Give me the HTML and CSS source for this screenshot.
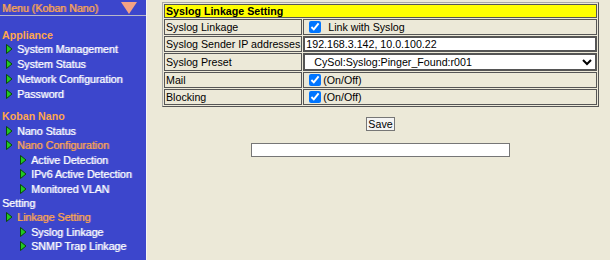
FILE: index.html
```html
<!DOCTYPE html>
<html lang="en">
<head>
    <meta charset="UTF-8">
    <title>Syslog Linkage Setting</title>
    <link rel="stylesheet" href="styles.css">
</head>
<body>
    <div class="frames">
        <nav class="menu">
            <div class="menu-head">
                <span class="menu-title">Menu (Koban Nano)</span>
                <svg class="menu-toggle" width="16" height="12" viewBox="0 0 16 12"><polygon points="0,0 16,0 8,12" fill="#f4a284"/></svg>
            </div>

            <div class="group appliance">
                <div class="group-title">Appliance</div>
                <div class="item lv1"><svg class="arrow" width="7" height="10" viewBox="0 0 7 10"><polygon points="0.5,0.5 6,5 0.5,9.5" fill="#22c822" stroke="#0a4a0a" stroke-width="1"/></svg>System Management</div>
                <div class="item lv1"><svg class="arrow" width="7" height="10" viewBox="0 0 7 10"><polygon points="0.5,0.5 6,5 0.5,9.5" fill="#22c822" stroke="#0a4a0a" stroke-width="1"/></svg>System Status</div>
                <div class="item lv1"><svg class="arrow" width="7" height="10" viewBox="0 0 7 10"><polygon points="0.5,0.5 6,5 0.5,9.5" fill="#22c822" stroke="#0a4a0a" stroke-width="1"/></svg>Network Configuration</div>
                <div class="item lv1"><svg class="arrow" width="7" height="10" viewBox="0 0 7 10"><polygon points="0.5,0.5 6,5 0.5,9.5" fill="#22c822" stroke="#0a4a0a" stroke-width="1"/></svg>Password</div>
            </div>

            <div class="group nano">
                <div class="group-title">Koban Nano</div>
                <div class="item lv1"><svg class="arrow" width="7" height="10" viewBox="0 0 7 10"><polygon points="0.5,0.5 6,5 0.5,9.5" fill="#22c822" stroke="#0a4a0a" stroke-width="1"/></svg>Nano Status</div>
                <div class="item lv1 open"><svg class="arrow" width="7" height="10" viewBox="0 0 7 10"><polygon points="0.5,0.5 6,5 0.5,9.5" fill="#22c822" stroke="#0a4a0a" stroke-width="1"/></svg>Nano Configuration</div>
                <div class="item lv2"><svg class="arrow" width="7" height="10" viewBox="0 0 7 10"><polygon points="0.5,0.5 6,5 0.5,9.5" fill="#22c822" stroke="#0a4a0a" stroke-width="1"/></svg>Active Detection</div>
                <div class="item lv2"><svg class="arrow" width="7" height="10" viewBox="0 0 7 10"><polygon points="0.5,0.5 6,5 0.5,9.5" fill="#22c822" stroke="#0a4a0a" stroke-width="1"/></svg>IPv6 Active Detection</div>
                <div class="item lv2"><svg class="arrow" width="7" height="10" viewBox="0 0 7 10"><polygon points="0.5,0.5 6,5 0.5,9.5" fill="#22c822" stroke="#0a4a0a" stroke-width="1"/></svg>Monitored VLAN Setting</div>
                <div class="item lv1 open"><svg class="arrow" width="7" height="10" viewBox="0 0 7 10"><polygon points="0.5,0.5 6,5 0.5,9.5" fill="#22c822" stroke="#0a4a0a" stroke-width="1"/></svg>Linkage Setting</div>
                <div class="item lv2"><svg class="arrow" width="7" height="10" viewBox="0 0 7 10"><polygon points="0.5,0.5 6,5 0.5,9.5" fill="#22c822" stroke="#0a4a0a" stroke-width="1"/></svg>Syslog Linkage</div>
                <div class="item lv2"><svg class="arrow" width="7" height="10" viewBox="0 0 7 10"><polygon points="0.5,0.5 6,5 0.5,9.5" fill="#22c822" stroke="#0a4a0a" stroke-width="1"/></svg>SNMP Trap Linkage</div>
            </div>
        </nav>

        <main class="content">
            <table class="setting">
                <tr>
                    <th colspan="2">Syslog Linkage Setting</th>
                </tr>
                <tr>
                    <td class="label">Syslog Linkage</td>
                    <td><input type="checkbox" checked> <span class="check-text">Link with Syslog</span></td>
                </tr>
                <tr>
                    <td class="label">Syslog Sender IP addresses</td>
                    <td class="field"><input type="text" class="text-field" value="192.168.3.142, 10.0.100.22"></td>
                </tr>
                <tr>
                    <td class="label">Syslog Preset</td>
                    <td class="field">
                        <select class="select-field">
                            <option>CySol:Syslog:Pinger_Found:r001</option>
                        </select>
                    </td>
                </tr>
                <tr>
                    <td class="label">Mail</td>
                    <td><input type="checkbox" checked>(On/Off)</td>
                </tr>
                <tr>
                    <td class="label">Blocking</td>
                    <td><input type="checkbox" checked>(On/Off)</td>
                </tr>
            </table>

            <div class="actions">
                <button class="save-btn">Save</button>
            </div>
            <div class="status">
                <input type="text" class="status-field">
            </div>
        </main>
    </div>
</body>
</html>
```

FILE: styles.css
```css
body {
    margin: 0;
    font-family: "Liberation Sans", Arial, sans-serif;
    font-size: 10.67px;
    background-color: #ece9d8;
}
.frames {
    display: flex;
    min-height: 260px;
}
.menu {
    width: 142px;
    flex-shrink: 0;
    padding-right: 4px;
    background-color: #3c46cc;
    border-right: 1px solid #f4f4f4;
    color: #ffffff;
}
.menu-head {
    display: flex;
    justify-content: space-between;
    align-items: center;
    height: 15px;
    margin-right: -4px;
    padding: 0 9px 0 2px;
    border-bottom: 1px solid #b8b8c8;
}
.menu-title {
    color: #ffa64d;
    text-shadow: 1px 0 0 rgba(255, 166, 77, 0.6);
}
.menu-toggle {
    display: block;
    margin-top: 1px;
}
.group {
    padding-left: 2px;
}
.appliance {
    padding-top: 12px;
}
.nano {
    padding-top: 7px;
}
.group-title {
    color: #ffa64d;
    font-weight: bold;
    line-height: 14px;
}
.item {
    line-height: 14.4px;
    text-shadow: 1px 0 0 rgba(255, 255, 255, 0.55);
}
.appliance .item {
    line-height: 15px;
}
.nano .group-title {
    margin-bottom: 1px;
}
.item.open {
    color: #ffa64d;
    text-shadow: 1px 0 0 rgba(255, 166, 77, 0.55);
}
.lv1 {
    text-indent: 4px;
}
.lv2 {
    text-indent: 18px;
}
.arrow {
    vertical-align: -1px;
    margin-right: 4px;
}
.content {
    flex: 1;
    padding: 2px 0 0 15px;
}
.setting {
    width: 437px;
    border-collapse: separate;
    border-spacing: 1px;
    border: 1px solid;
    border-color: #a8a8a8 #555555 #555555 #a8a8a8;
}
.setting th,
.setting td {
    border: 1px solid #555555;
    padding: 1px;
    height: 12px;
    line-height: 12px;
    font-size: 10.67px;
    text-align: left;
    white-space: nowrap;
}
.setting th {
    background-color: #ffff00;
    padding: 0 1px;
}
.setting td.label {
    width: 134px;
}
.setting td.field {
    padding: 0;
}
.setting input[type="checkbox"] {
    width: 12px;
    height: 12px;
    margin: 0 2px 0 4px;
    vertical-align: -2px;
}
.check-text {
    margin-left: 2px;
}
.text-field,
.select-field {
    display: block;
    width: 100%;
    height: 14px;
    box-sizing: border-box;
    margin: 0;
    font-family: "Liberation Sans", Arial, sans-serif;
    font-size: 10.67px;
    border: 1px solid #555555;
    background-color: #ffffff;
    padding: 0 1px;
}
.select-field {
    height: 16px;
    padding: 0 0 0 5px;
    border-radius: 0;
}
.actions {
    margin-top: 10px;
    width: 437px;
    text-align: center;
}
.save-btn {
    font-family: "Liberation Sans", Arial, sans-serif;
    font-size: 10.67px;
    height: 14px;
    padding: 0 1px;
    border: 1px solid #767676;
    background-color: #f4f4f4;
    line-height: 12px;
    border-radius: 0;
}
.status {
    margin-top: 12px;
    width: 437px;
    text-align: center;
}
.status-field {
    width: 259px;
    height: 14px;
    box-sizing: border-box;
    border: 1px solid #767676;
    padding: 0;
    margin: 0;
}
```
